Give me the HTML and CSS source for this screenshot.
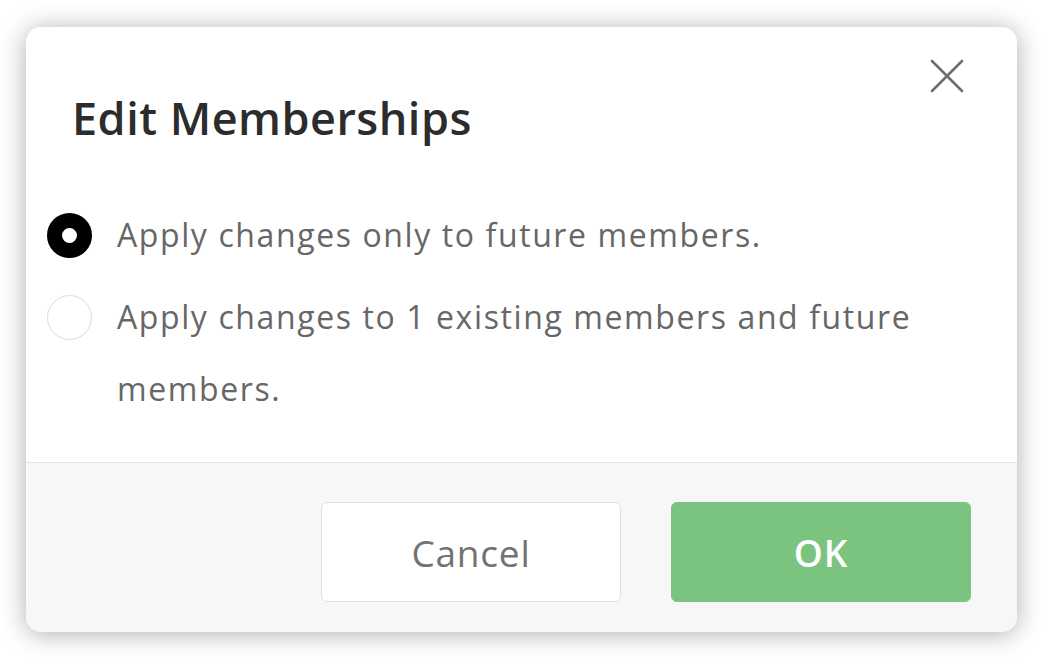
FILE: index.html
```html
<!DOCTYPE html>
<html lang="en">
<head>
<meta charset="utf-8">
<title>Edit Memberships</title>
<link rel="stylesheet" href="styles.css">
</head>
<body>
<div class="dialog" role="dialog" aria-labelledby="dlg-title">
  <header class="dialog-header">
    <h1 id="dlg-title" class="dialog-title">Edit Memberships</h1>
    <button class="close-btn" type="button" aria-label="Close">
      <svg width="34" height="34" viewBox="0 0 34 34" aria-hidden="true">
        <path d="M2 2 L32 32 M32 2 L2 32" stroke="#6f6f6f" stroke-width="2.6" stroke-linecap="round" fill="none"/>
      </svg>
    </button>
  </header>
  <div class="dialog-body">
    <label class="option">
      <span class="radio radio-checked"></span>
      <span class="option-text">Apply changes only to future members.</span>
    </label>
    <label class="option">
      <span class="radio"></span>
      <span class="option-text">Apply changes to 1 existing members and future members.</span>
    </label>
  </div>
  <footer class="dialog-footer">
    <button class="btn btn-cancel" type="button">Cancel</button>
    <button class="btn btn-ok" type="button">OK</button>
  </footer>
</div>
</body>
</html>
```

FILE: styles.css
```css
html, body {
  margin: 0;
  padding: 0;
  background: #ffffff;
}

body {
  width: 1043px;
  height: 657px;
  overflow: hidden;
  font-family: "Open Sans", Lato, "Liberation Sans", sans-serif;
}

.dialog {
  position: relative;
  box-sizing: border-box;
  width: 991px;
  height: 605px;
  margin: 27px 0 0 26px;
  background: #ffffff;
  border-radius: 15px;
  box-shadow: 0 2px 26px rgba(0, 0, 0, 0.32);
  display: flex;
  flex-direction: column;
  overflow: hidden;
}

.dialog-header {
  padding: 63px 46px 0;
}

.dialog-title {
  margin: 0;
  font-size: 45px;
  line-height: 56px;
  font-weight: 600;
  color: #2c2c2c;
  letter-spacing: 0.5px;
}

.close-btn {
  position: absolute;
  top: 32px;
  right: 53px;
  padding: 0;
  border: 0;
  background: transparent;
  display: flex;
  cursor: pointer;
}

.dialog-body {
  padding: 53px 0 0 21px;
  display: flex;
  flex-direction: column;
  gap: 10px;
}

.option {
  display: flex;
  align-items: flex-start;
  gap: 25px;
  padding-right: 90px;
}

.radio {
  flex: none;
  box-sizing: border-box;
  width: 45px;
  height: 45px;
  margin-top: 14px;
  border-radius: 50%;
  border: 1.5px solid #dcdcdc;
  background: #ffffff;
}

.radio-checked {
  border: 15px solid #000000;
}

.option-text {
  font-size: 32px;
  line-height: 72px;
  color: #676767;
  letter-spacing: 1.6px;
}

.dialog-footer {
  margin-top: auto;
  height: 170px;
  box-sizing: border-box;
  border-top: 1px solid #e6e6e6;
  background: #f7f7f7;
  display: flex;
  justify-content: flex-end;
  align-items: flex-start;
  gap: 50px;
  padding: 39px 46px 0;
}

.btn {
  box-sizing: border-box;
  width: 300px;
  height: 100px;
  border-radius: 6px;
  font-family: inherit;
  font-size: 37px;
  letter-spacing: 0.8px;
  cursor: pointer;
}

.btn-cancel {
  background: #ffffff;
  border: 1px solid #e0e0e0;
  color: #727272;
}

.btn-ok {
  background: #7ac47f;
  border: 1px solid #7ac47f;
  color: #ffffff;
  font-weight: 600;
}
```
